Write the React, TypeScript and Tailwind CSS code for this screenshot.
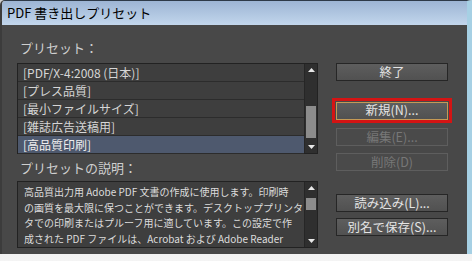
import React from "react";

const font = { fontFamily: '"Noto Sans CJK JP", "Noto Sans", sans-serif' };

const presets = [
  "[PDF/X-4:2008 (日本)]",
  "[プレス品質]",
  "[最小ファイルサイズ]",
  "[雑誌広告送稿用]",
  "[高品質印刷]",
];

const descLines = [
  "高品質出力用 Adobe PDF 文書の作成に使用します。印刷時",
  "の画質を最大限に保つことができます。デスクトッププリンタ",
  "タでの印刷またはプルーフ用に適しています。この設定で作",
  "成された PDF ファイルは、Acrobat および Adobe Reader",
];

function Scrollbar({ thumbTop, thumbHeight }: { thumbTop: number; thumbHeight: number }) {
  return (
    <div className="relative w-[13px] h-full bg-[#2f2f2f] border-l border-[#262626] flex flex-col items-center justify-between py-[4px]">
      <svg width="7" height="4" viewBox="0 0 7 4">
        <polygon points="0,4 3.5,0 7,4" fill="#e8e8e8" />
      </svg>
      <div
        className="absolute left-[1px] right-[1px] bg-[#8c8c8c]"
        style={{ top: thumbTop, height: thumbHeight }}
      />
      <svg width="7" height="4" viewBox="0 0 7 4">
        <polygon points="0,0 3.5,4 7,0" fill="#e8e8e8" />
      </svg>
    </div>
  );
}

function Btn({ label, disabled, className = "" }: { label: string; disabled?: boolean; className?: string }) {
  return (
    <div
      className={
        "h-[18px] w-[112px] flex items-center justify-center text-[12.5px] leading-none border " +
        (disabled
          ? "border-[#5e5e5e] text-[#777777] bg-[#4a4a4a] "
          : "border-[#262626] text-[#e4e4e4] bg-gradient-to-b from-[#5e5e5e] to-[#515151] ") +
        className
      }
    >
      {label}
    </div>
  );
}

export default function App() {
  return (
    <div className="w-[472px] h-[261px] overflow-hidden bg-gradient-to-b from-[#cfcfcf] to-[#f4f4f4]" style={font}>
      <div className="h-[254px] flex flex-col border-l-2 border-l-[#3c3c3c] border-r-[5px] border-r-[#a6d0e4] border-t border-t-[#2e3a48] rounded-tl-[5px] overflow-hidden">
        <div className="h-[24px] shrink-0 bg-gradient-to-b from-[#9db5d4] to-[#c2d6ec] flex items-center pl-[5px] text-[13px] text-black">
          PDF 書き出しプリセット
        </div>
        <div className="flex-1 bg-[#484848] flex">
          <div className="pl-[15px] pt-[14px] w-[316px]">
            <div className="pl-[3px] h-[18px] text-[13px] leading-[18px] text-[#cfcfcf]">プリセット：</div>
            <div className="mt-[6px] h-[91px] border border-[#222222] flex bg-[#3e3e3e]">
              <div className="flex-1 flex flex-col">
                {presets.map((p, i) => (
                  <div
                    key={p}
                    className={
                      "h-[18px] shrink-0 pl-[5px] flex items-center text-[12px] border-b border-[#2c2c2c] " +
                      (i === 4 ? "bg-[#4e596e] text-[#eeeeee]" : "text-[#d6d6d6]")
                    }
                  >
                    {p}
                  </div>
                ))}
              </div>
              <Scrollbar thumbTop={42} thumbHeight={32} />
            </div>
            <div className="pl-[3px] mt-[5px] h-[18px] text-[13px] leading-[18px] text-[#cfcfcf]">プリセットの説明：</div>
            <div className="mt-[4px] h-[67px] border border-[#222222] flex bg-[#3e3e3e]">
              <div className="flex-1 pl-[6px] pt-[2px] text-[10px] leading-[15.6px] text-[#dcdcdc] whitespace-nowrap overflow-hidden">
                {descLines.map((l) => (
                  <div key={l}>{l}</div>
                ))}
              </div>
              <Scrollbar thumbTop={16} thumbHeight={12} />
            </div>
          </div>
          <div className="ml-[18px] pt-[38px] flex flex-col">
            <Btn label="終了" />
            <div className="mt-[17px] -ml-[4px] w-[120px] h-[25px] border-[3px] border-[#d41414] flex items-center justify-center">
              <Btn label="新規(N)..." className="border-[#c59a55]" />
            </div>
            <Btn label="編集(E)..." disabled className="mt-[5px]" />
            <Btn label="削除(D)" disabled className="mt-[7px]" />
            <Btn label="読み込み(L)..." className="mt-[23px]" />
            <Btn label="別名で保存(S)..." className="mt-[6px]" />
          </div>
        </div>
      </div>
    </div>
  );
}
